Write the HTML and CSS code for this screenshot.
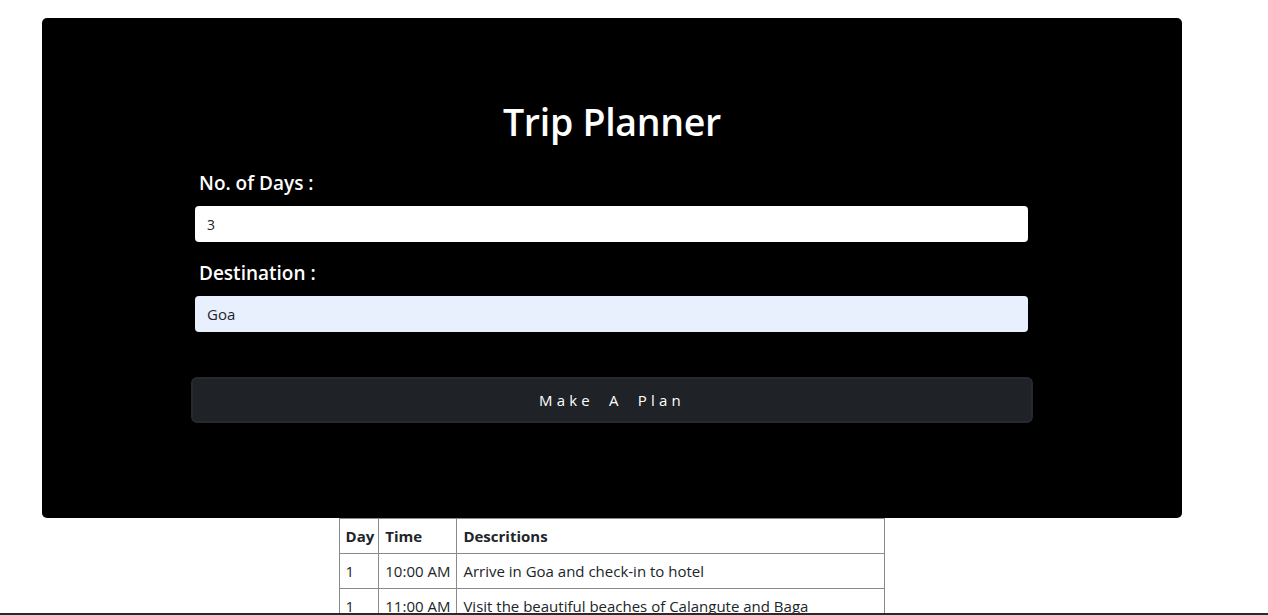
FILE: index.html
```html
<!DOCTYPE html>
<html>
<head>
<meta charset="utf-8">
<link rel="stylesheet" href="styles.css">
</head>
<body>
<div class="page">
  <div class="card">
    <h1 class="title">Trip Planner</h1>
    <form class="form">
      <label class="label">No. of Days :</label>
      <input class="field" type="text" value="3">
      <label class="label label-second">Destination :</label>
      <input class="field field-auto" type="text" value="Goa">
      <button class="btn" type="button">Make A Plan</button>
    </form>
  </div>
  <div class="table-wrap">
    <table class="plan">
      <thead>
        <tr><th>Day</th><th>Time</th><th>Descritions</th></tr>
      </thead>
      <tbody>
        <tr><td>1</td><td>10:00 AM</td><td>Arrive in Goa and check-in to hotel</td></tr>
        <tr><td>1</td><td>11:00 AM</td><td>Visit the beautiful beaches of Calangute and Baga</td></tr>
      </tbody>
    </table>
  </div>
</div>
<div class="bottom-bar"></div>
</body>
</html>
```
FILE: styles.css
```css
html, body {
  margin: 0;
  padding: 0;
  background: #fff;
  font-family: "Open Sans", "Noto Sans", sans-serif;
  color: #212529;
  overflow: hidden;
}
.page {
  width: 1140px;
  margin: 18px 0 0 42px;
}
.card {
  background: #000;
  border-radius: 5px;
  height: 500px;
  box-sizing: border-box;
  padding-top: 79px;
  display: flex;
  flex-direction: column;
  align-items: center;
}
.title {
  margin: 0;
  color: #fff;
  font-size: 37.5px;
  font-weight: 600;
  line-height: 50px;
  letter-spacing: -0.3px;
}
.form {
  width: 842px;
  margin-top: 23px;
  display: flex;
  flex-direction: column;
}
.label {
  color: #fff;
  font-size: 19px;
  font-weight: 600;
  line-height: 26px;
  margin-left: 8px;
}
.label-second {
  margin-top: 18px;
}
.field {
  margin: 10px 5px 0 4px;
  height: 36px;
  box-sizing: border-box;
  border: none;
  border-radius: 4px;
  background: #fff;
  padding: 0 12px;
  font-family: "Open Sans", "Noto Sans", sans-serif;
  font-size: 14px;
  color: #212529;
  outline: none;
}
.field-auto {
  background: #e8f0fe;
  font-size: 15px;
}
.btn {
  margin-top: 45px;
  height: 46px;
  background: #1f2226;
  border: 2px solid #26292d;
  border-radius: 6px;
  color: #fff;
  font-family: "Open Sans", "Noto Sans", sans-serif;
  font-size: 15px;
  letter-spacing: 4.2px;
  word-spacing: 7px;
  cursor: pointer;
}
.table-wrap {
  display: flex;
  justify-content: center;
}
.plan {
  border-collapse: collapse;
  font-size: 15px;
  color: #212529;
}
.plan th, .plan td {
  border: 1px solid #8a8a8a;
  height: 34px;
  padding: 0 6px;
  text-align: left;
  white-space: nowrap;
  line-height: 20px;
}
.plan th {
  font-weight: 700;
}
.plan th:first-child, .plan td:first-child {
  padding-right: 4px;
}
.plan td:nth-child(3), .plan th:nth-child(3) {
  width: 415px;
}
.bottom-bar {
  position: fixed;
  left: 0;
  right: 0;
  bottom: 0;
  height: 2px;
  background: #2a2a2a;
}
```
